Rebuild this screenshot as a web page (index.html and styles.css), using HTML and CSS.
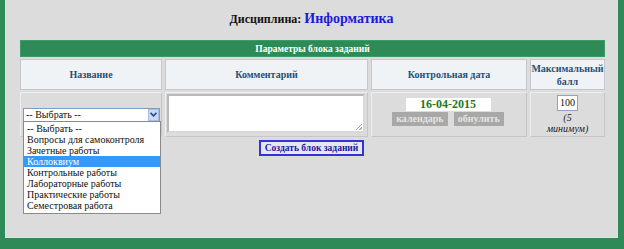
FILE: index.html
```html
<!doctype html>
<html lang="ru">
<head>
	<meta charset="UTF-8" />
	<title>Параметры блока заданий</title>
<link rel="stylesheet" href="styles.css">
</head>
<body>
	<section class="page">
		<h1 class="title">Дисциплина: <span class="subject">Информатика</span></h1>
		<table class="params">
			<colgroup>
				<col class="c-name"/>
				<col class="c-comment"/>
				<col class="c-date"/>
				<col class="c-max"/>
			</colgroup>
			<tr>
				<th colspan="4" class="caption">Параметры блока заданий</th>
			</tr>
			<tr class="head">
				<th>Название</th>
				<th>Комментарий</th>
				<th>Контрольная дата</th>
				<th>Максимальный балл</th>
			</tr>
			<tr class="data">
				<td>
					<div class="select">
						<span class="select-text">-- Выбрать --</span>
						<span class="select-arrow">
							<svg width="7" height="5" viewBox="0 0 7 5"><path d="M0.5 0.8 L3.5 3.8 L6.5 0.8" fill="none" stroke="#2b4c8a" stroke-width="1.6"/></svg>
						</span>
						<ul class="options">
							<li>-- Выбрать --</li>
							<li>Вопросы для самоконтроля</li>
							<li>Зачетные работы</li>
							<li class="active">Коллоквиум</li>
							<li>Контрольные работы</li>
							<li>Лабораторные работы</li>
							<li>Практические работы</li>
							<li>Семестровая работа</li>
						</ul>
					</div>
				</td>
				<td><div class="comment"><span class="grip"></span></div></td>
				<td>
					<div class="date">16-04-2015</div>
					<div class="date-btns">
						<a href="javascript:;" class="btn-gray">календарь</a>
						<a href="javascript:;" class="btn-gray">обнулить</a>
					</div>
				</td>
				<td class="max">
					<div class="max-input">100</div>
					<div class="max-note">(5<br/>минимум)</div>
				</td>
			</tr>
		</table>
		<div class="actions">
			<a href="javascript:;" class="btn-create">Создать блок заданий</a>
		</div>
	</section>
</body>
</html>
```

FILE: styles.css
```css
*{
	margin: 0;
	padding: 0;
	box-sizing: border-box;
}
body{
	background: #2e8b57;
	font-family: "Liberation Serif", "DejaVu Serif", serif;
}
.page{
	height: 238px;
	margin: 0 6px 0 5px;
	background: #dcdcdc;
	border-left: 1px solid #cfeadb;
	border-bottom: 1px solid #cfeadb;
	border-right: 1px solid #cfeadb;
	padding-top: 11px;
}
.title{
	text-align: center;
	font-size: 12px;
	font-weight: bold;
	color: #111;
	height: 27px;
	line-height: 16px;
}
.subject{
	font-size: 14px;
	color: #1a1ad8;
}
.params{
	width: 591px;
	margin-left: 11px;
	table-layout: fixed;
	border-collapse: separate;
	border-spacing: 3px 2px;
}
.c-name{ width: 142px; }
.c-comment{ width: 203px; }
.c-date{ width: 156px; }
.c-max{ width: 75px; }
.caption{
	height: 17px;
	background: #2e8b57;
	color: #fff;
	font-size: 9.5px;
	font-weight: bold;
	text-align: center;
	border: 1px solid #3c9a66;
}
.head th{
	height: 31px;
	background: #f0f3f6;
	border: 1px solid #c4c8cc;
	color: #1f4f7a;
	font-size: 10px;
	font-weight: bold;
	line-height: 13px;
	text-align: center;
}
.data td{
	height: 45px;
	border: 1px solid #c6c6c6;
	border-top-color: #eeeeee;
	border-left-color: #eeeeee;
	vertical-align: middle;
	text-align: center;
	font-size: 10px;
}
.select{
	position: relative;
	width: 137px;
	height: 14px;
	margin: 0 0 0 2px;
	background: #fff;
	border: 1px solid #7f9db9;
	display: flex;
	align-items: center;
	text-align: left;
}
.select-text{
	flex: 1;
	padding-left: 2px;
	font-size: 10px;
	line-height: 12px;
	color: #111;
}
.select-arrow{
	width: 11px;
	height: 12px;
	background: #c9daf5;
	border: 1px solid #a9bde0;
	display: flex;
	align-items: center;
	justify-content: center;
}
.options{
	position: absolute;
	left: -1px;
	top: 12px;
	width: 138px;
	list-style: none;
	background: #fff;
	border: 1px solid #8a8a8a;
	padding: 1px 0 2px;
}
.options li{
	height: 11px;
	line-height: 11px;
	font-size: 10px;
	padding-left: 3px;
	color: #111;
	white-space: nowrap;
}
.options li.active{
	background: #3399ff;
	color: #fff;
}
.comment{
	position: relative;
	width: 198px;
	height: 39px;
	margin-left: 1px;
	margin-top: -2px;
	background: #fff;
	border: 2px solid #b9b9b9;
	border-right-color: #d9d9d9;
	border-bottom-color: #d9d9d9;
}
.grip{
	position: absolute;
	right: 1px;
	bottom: 1px;
	width: 6px;
	height: 6px;
	background: linear-gradient(135deg, transparent 45%, #aaa 45%, #aaa 55%, transparent 55%, transparent 75%, #aaa 75%, #aaa 85%, transparent 85%);
}
.date{
	width: 85px;
	height: 13px;
	margin: 0 auto;
	background: #fff;
	color: #1d7a1d;
	font-size: 12px;
	font-weight: bold;
	line-height: 13px;
	position: relative;
	left: -1px;
}
.date-btns{
	display: flex;
	justify-content: center;
	gap: 6px;
	margin-top: 1px;
	margin-bottom: 5px;
	padding-right: 2px;
}
.btn-gray{
	display: block;
	height: 14px;
	padding: 0 4px;
	background: #a8a8a8;
	color: #e4e4e4;
	font-size: 10px;
	font-weight: bold;
	line-height: 14px;
	text-decoration: none;
}
.max-input{
	width: 21px;
	height: 16px;
	margin: 0 auto;
	background: #fff;
	border: 1px solid #8ea4bd;
	font-size: 10px;
	line-height: 14px;
	text-align: left;
	padding-left: 2px;
	color: #111;
}
.max-note{
	margin-top: 1px;
	font-size: 10px;
	font-style: italic;
	line-height: 11px;
	color: #222;
}
.actions{
	display: flex;
	justify-content: center;
	margin-top: 1px;
}
.btn-create{
	display: block;
	height: 16px;
	padding: 0 4px;
	background: #e6e6f0;
	border: 2px solid #3434d6;
	color: #1a1a9c;
	font-size: 9.5px;
	font-weight: bold;
	line-height: 12px;
	text-decoration: none;
}
```
